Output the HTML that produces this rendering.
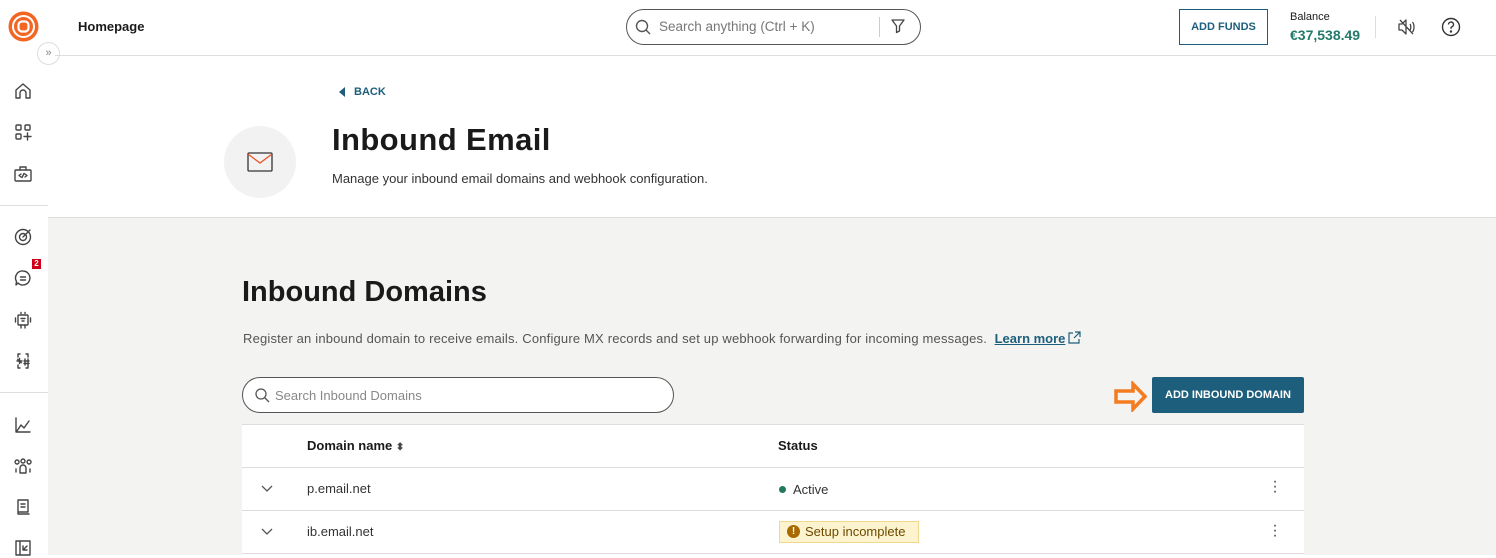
<!DOCTYPE html>
<html><head><meta charset="utf-8"><style>
*{box-sizing:border-box;margin:0;padding:0}
body{width:1496px;height:555px;overflow:hidden;font-family:"Liberation Sans",Arial,sans-serif;background:#fff;position:relative;color:#1a1a1a}
.abs{position:absolute}
svg{display:block}
.ic{position:absolute;left:13px;width:20px;height:20px;fill:none;stroke:#444;stroke-width:1.4;stroke-linecap:round;stroke-linejoin:round}
</style></head><body>
<div class="abs" style="left:0;top:0;width:48px;height:555px;background:#fff"></div>
<svg class="abs" style="left:8px;top:11px" width="31" height="31" viewBox="0 0 31 31"><circle cx="15.5" cy="15.5" r="15" fill="#f26522"/><circle cx="15.5" cy="15.5" r="10.5" fill="none" stroke="#fff" stroke-width="2"/><rect x="10.5" y="10.5" width="10" height="10" rx="3.5" fill="none" stroke="#fff" stroke-width="2.2"/></svg>
<div class="abs" style="left:37px;top:42px;width:23px;height:23px;border-radius:50%;background:#fff;border:1px solid #ddd;font-size:11px;color:#888;text-align:center;line-height:20px">»</div>
<svg class="ic" style="top:81px" viewBox="0 0 20 20"><path d="M3 9l7-6 7 6v8h-4v-5a3 3 0 0 0-6 0v5H3z"/></svg>
<svg class="ic" style="top:122px" viewBox="0 0 20 20"><rect x="3" y="3" width="5" height="5" rx="1"/><rect x="12" y="3" width="5" height="5" rx="1"/><rect x="3" y="12" width="5" height="5" rx="1"/><path d="M14.5 11v7M11 14.5h7"/></svg>
<svg class="ic" style="top:164px" viewBox="0 0 20 20"><rect x="2" y="6" width="16" height="11" rx="1"/><path d="M7 6V3h6v3M8 10l-2 1.5L8 13M12 10l2 1.5L12 13M11 9.5l-2 4"/></svg>
<div class="abs" style="left:0;top:205px;width:48px;height:1px;background:#ddd"></div>
<svg class="ic" style="top:227px" viewBox="0 0 20 20"><circle cx="10" cy="10" r="7.5"/><circle cx="10" cy="10" r="3.5"/><path d="M10 10l7-7"/></svg>
<svg class="ic" style="top:268px" viewBox="0 0 20 20"><path d="M10 3a7 7 0 1 1-5 12l-2 2 .5-3.5A7 7 0 0 1 10 3zM7.5 9h5M7.5 12h5"/></svg>
<div class="abs" style="left:32px;top:259px;width:9px;height:10px;background:#d0021b;color:#fff;font-size:8px;font-weight:bold;text-align:center;line-height:10px">2</div>
<svg class="ic" style="top:310px" viewBox="0 0 20 20"><rect x="5" y="5" width="10" height="10" rx="1"/><path d="M8 2.5v1M12 2.5v1M2.5 8v4M17.5 8v4M8 15v3M12 15v3M8 8.5h4M9 11h2"/></svg>
<svg class="ic" style="top:351px" viewBox="0 0 20 20"><path d="M7 3H5v3M7 17H5v-3M13 3h2v3M13 17h2v-3M4 10h5M6.5 7.5v5M4.7 8.3l3.6 3.4M12 8v6M15 8v6M11 10h5M11 12.5h5"/></svg>
<div class="abs" style="left:0;top:392px;width:48px;height:1px;background:#ddd"></div>
<svg class="ic" style="top:415px" viewBox="0 0 20 20"><path d="M3 3v14h14M4 16l4-6 3 3 5-7"/></svg>
<svg class="ic" style="top:456px" viewBox="0 0 20 20"><circle cx="10" cy="5" r="2"/><path d="M7 17v-5a3 3 0 0 1 6 0v5zM4 8a2 2 0 1 1 0.1 0M16 8a2 2 0 1 1 .1 0M3 16v-3M17 16v-3"/></svg>
<svg class="ic" style="top:497px" viewBox="0 0 20 20"><path d="M5 3h10v12H5zM5 15v2h11M8 7h4M8 10h4"/></svg>
<svg class="ic" style="top:538px" viewBox="0 0 20 20"><path d="M3 3h14v14H3zM7 3v14M10 12l4-4M10 8v4h4"/></svg>
<div class="abs" style="left:78px;top:19px;font-size:13px;font-weight:bold">Homepage</div>
<div class="abs" style="left:55px;top:55px;width:1441px;height:1px;background:#ddd"></div>
<div class="abs" style="left:626px;top:9px;width:295px;height:36px;border:1px solid #555;border-radius:18px"></div>
<svg class="abs" style="left:634px;top:18px" width="18" height="18" viewBox="0 0 18 18" fill="none" stroke="#555" stroke-width="1.4"><circle cx="8" cy="8" r="5.5"/><path d="M12 12l4 4"/></svg>
<div class="abs" style="left:659px;top:19px;font-size:13.5px;color:#777">Search anything (Ctrl + K)</div>
<div class="abs" style="left:879px;top:17px;width:1px;height:20px;background:#ccc"></div>
<svg class="abs" style="left:890px;top:18px" width="16" height="16" viewBox="0 0 16 16" fill="none" stroke="#444" stroke-width="1.3" stroke-linejoin="round"><path d="M2 2h12l-4.5 6v5l-3 1.5V8z"/></svg>
<div class="abs" style="left:1179px;top:9px;width:89px;height:36px;border:1px solid #1d5e7c;color:#1d5e7c;font-size:11px;font-weight:bold;text-align:center;line-height:34px">ADD FUNDS</div>
<div class="abs" style="left:1290px;top:11px;font-size:11px">Balance</div>
<div class="abs" style="left:1290px;top:27px;font-size:14px;font-weight:bold;color:#237a6a">€37,538.49</div>
<div class="abs" style="left:1375px;top:16px;width:1px;height:22px;background:#ddd"></div>
<svg class="abs" style="left:1397px;top:17px" width="20" height="20" viewBox="0 0 20 20" fill="none" stroke="#444" stroke-width="1.3" stroke-linejoin="round"><path d="M2 7h3l4-4v14l-4-4H2zM13 7c1 1 1 5 0 6M15.5 5c2 2.5 2 7.5 0 10M3 3l13 14"/></svg>
<svg class="abs" style="left:1441px;top:17px" width="20" height="20" viewBox="0 0 20 20" fill="none" stroke="#333" stroke-width="1.4"><circle cx="10" cy="10" r="8.5"/><path d="M7.5 7.5a2.5 2.5 0 1 1 3.2 2.4c-.5.2-.7.6-.7 1.1v.8"/><circle cx="10" cy="14.5" r=".5" fill="#333"/></svg>
<svg class="abs" style="left:338px;top:86px" width="8" height="12" viewBox="0 0 8 12"><path d="M7 1v10L1 6z" fill="#1d5e7c"/></svg>
<div class="abs" style="left:354px;top:86px;font-size:11px;font-weight:bold;color:#1d5e7c">BACK</div>
<div class="abs" style="left:224px;top:126px;width:72px;height:72px;border-radius:50%;background:#f2f2f2"></div>
<svg class="abs" style="left:247px;top:152px" width="26" height="20" viewBox="0 0 26 20" fill="none" stroke="#333" stroke-width="1.3"><rect x="1" y="1" width="24" height="18" rx="1"/><path d="M1 2l12 9 12-9" stroke="#e8562a"/></svg>
<div class="abs" style="left:332px;top:122px;font-size:31px;font-weight:bold;color:#1a1a1a;letter-spacing:0.4px">Inbound Email</div>
<div class="abs" style="left:332px;top:171px;font-size:13px;color:#333">Manage your inbound email domains and webhook configuration.</div>
<div class="abs" style="left:48px;top:217px;width:1448px;height:338px;background:#f3f3f2;border-top:1px solid #ddd"></div>
<div class="abs" style="left:242px;top:276px;font-size:29px;font-weight:bold;color:#1a1a1a">Inbound Domains</div>
<div class="abs" style="left:243px;top:331px;font-size:13px;color:#555;letter-spacing:0.18px">Register an inbound domain to receive emails. Configure MX records and set up webhook forwarding for incoming messages. &nbsp;<span style="color:#1d5e7c;font-weight:bold;text-decoration:underline;letter-spacing:0">Learn more</span></div>
<svg class="abs" style="left:1067px;top:331px" width="14" height="14" viewBox="0 0 14 14" fill="none" stroke="#1d5e7c" stroke-width="1.2"><path d="M6 2H2v10h10V8M8 1h5v5M13 1L7 7"/></svg>
<div class="abs" style="left:242px;top:377px;width:432px;height:36px;border:1px solid #555;border-radius:18px;background:#fff"></div>
<svg class="abs" style="left:254px;top:387px" width="16" height="16" viewBox="0 0 16 16" fill="none" stroke="#555" stroke-width="1.3"><circle cx="7" cy="7" r="5"/><path d="M11 11l4 4"/></svg>
<div class="abs" style="left:275px;top:388px;font-size:13px;color:#888">Search Inbound Domains</div>
<svg class="abs" style="left:1114px;top:381px" width="33" height="31" viewBox="0 0 33 31"><path d="M2 10h17V3l12 12.5L19 28v-7H2z" fill="none" stroke="#f47c20" stroke-width="3.5"/></svg>
<div class="abs" style="left:1152px;top:377px;width:152px;height:36px;background:#1d5e7c;border-radius:2px;color:#fff;font-size:11px;font-weight:bold;text-align:center;line-height:36px">ADD INBOUND DOMAIN</div>
<div class="abs" style="left:242px;top:424px;width:1062px;height:131px;background:#fff;border-top:1px solid #ddd"></div>
<div class="abs" style="left:307px;top:438px;font-size:13px;font-weight:bold">Domain name <span style="font-size:10px;color:#444">⬍</span></div>
<div class="abs" style="left:778px;top:438px;font-size:13px;font-weight:bold">Status</div>
<div class="abs" style="left:242px;top:467px;width:1062px;height:1px;background:#ddd"></div>
<div class="abs" style="left:242px;top:510px;width:1062px;height:1px;background:#ddd"></div>
<div class="abs" style="left:242px;top:553px;width:1062px;height:1px;background:#ddd"></div>
<svg class="abs" style="left:261px;top:485px" width="12" height="8" viewBox="0 0 12 8" fill="none" stroke="#555" stroke-width="1.3"><path d="M1 1l5 5 5-5"/></svg>
<svg class="abs" style="left:261px;top:528px" width="12" height="8" viewBox="0 0 12 8" fill="none" stroke="#555" stroke-width="1.3"><path d="M1 1l5 5 5-5"/></svg>
<div class="abs" style="left:307px;top:481px;font-size:13px;color:#333">p.email.net</div>
<div class="abs" style="left:307px;top:524px;font-size:13px;color:#333">ib.email.net</div>
<div class="abs" style="left:779px;top:486px;width:7px;height:7px;border-radius:50%;background:#237a5a"></div>
<div class="abs" style="left:793px;top:482px;font-size:13px;color:#333">Active</div>
<div class="abs" style="left:779px;top:521px;width:140px;height:22px;background:#fdf3cf;border:1px solid #f0d98a"></div>
<div class="abs" style="left:787px;top:525px;width:13px;height:13px;border-radius:50%;background:#a86a00;color:#fff;font-size:10px;font-weight:bold;text-align:center;line-height:13px">!</div>
<div class="abs" style="left:805px;top:524px;font-size:13px;color:#6b4a00">Setup incomplete</div>
<div class="abs" style="left:1270px;top:479px;font-size:16px;color:#444;line-height:5px;width:10px;text-align:center">·<br>·<br>·</div>
<div class="abs" style="left:1270px;top:523px;font-size:16px;color:#444;line-height:5px;width:10px;text-align:center">·<br>·<br>·</div>
</body></html>
